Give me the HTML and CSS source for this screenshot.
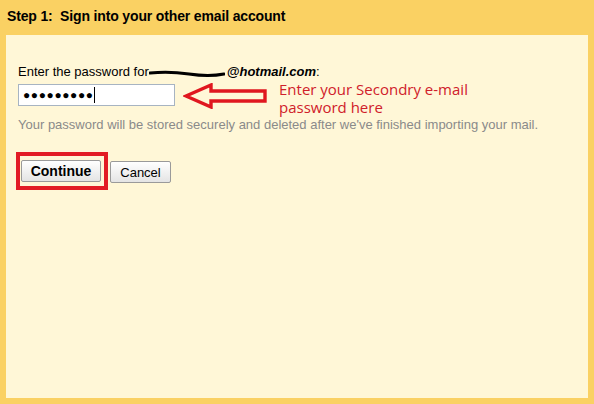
FILE: index.html
```html
<!DOCTYPE html>
<html>
<head>
<meta charset="utf-8">
<link rel="stylesheet" href="styles.css">
</head>
<body>
<div class="frame">
  <div class="title">Step 1:&nbsp; Sign into your other email account</div>
  <div class="panel">
    <div class="label">Enter the password for<svg class="redact" width="76" height="8" viewBox="0 0 76 8"><path d="M1 4 Q20 2 40 5 T75 5" stroke="#000" stroke-width="3" fill="none" stroke-linecap="round"/></svg><b><i>@hotmail.com</i></b>:</div>
    <div class="row">
      <div class="input"><span class="dots">●●●●●●●●●</span><span class="caret"></span></div>
      <svg class="arrow" width="86" height="26" viewBox="0 0 86 26"><path d="M3 13 L28 2 L28 8 L82 8 L82 18 L28 18 L28 24 Z" fill="#fff7d7" stroke="#e0171f" stroke-width="3.4" stroke-linejoin="miter"/></svg>
      <div class="note">Enter your Secondry e-mail<br>password here</div>
    </div>
    <div class="hint">Your password will be stored securely and deleted after we've finished importing your mail.</div>
    <div class="buttons">
      <div class="highlight"><button class="btn primary">Continue</button></div>
      <button class="btn">Cancel</button>
    </div>
  </div>
</div>
</body>
</html>
```
FILE: styles.css
```css
html, body { margin: 0; padding: 0; }
body { width: 594px; height: 404px; overflow: hidden; font-family: Arial, "Liberation Sans", sans-serif; }
.frame {
  background: #fad163;
  height: 404px;
  box-sizing: border-box;
  padding: 0 6px 6px 6px;
  display: flex;
  flex-direction: column;
}
.title {
  height: 35px;
  box-sizing: border-box;
  padding: 8px 0 0 1px;
  font-weight: bold;
  font-size: 14px;
  letter-spacing: -0.15px;
  color: #000;
}
.panel {
  flex: 1;
  background: #fff7d7;
  padding: 29px 0 0 12px;
}
.label { font-size: 13px; line-height: 15px; color: #000; height: 17px; display: flex; align-items: baseline; }
.redact { margin: 0 2px 0 0; position: relative; top: 1px; }
.row { display: flex; align-items: flex-start; margin-top: 3px; height: 24px; }
.input {
  height: 20px;
  border: 1px solid #a7b4c2;
  background: #fff;
  display: flex; align-items: center;
  padding-left: 4px;
  width: 151px;
}
.dots { font-size: 12px; letter-spacing: 0.6px; color: #000; }
.caret { width: 1px; height: 16px; background: #000; margin-left: 0; }
.arrow { margin: -1px 0 0 8px; }
.note {
  font-family: "Open Sans", sans-serif;
  font-size: 15px; line-height: 18px; color: #d0202a;
  margin: -4px 0 0 10px;
}
.hint { font-size: 13px; color: #8a8a8a; margin-top: 9px; }
.buttons { display: flex; align-items: flex-start; margin-top: 20px; margin-left: -2px; }
.highlight { border: 4px solid #e21c24; padding: 4px 3px 4px 1px; }
.btn {
  font-family: Arial, "Liberation Sans", sans-serif;
  font-size: 13px;
  height: 22px; padding: 0 8px;
  border: 1px solid #9a9a9a; border-radius: 2px;
  background: linear-gradient(#ffffff, #e4e4e4);
  color: #000;
}
.primary { font-weight: bold; font-size: 14px; width: 80px; }
.buttons > .btn { margin-left: 2px; margin-top: 9px; width: 61px; }
```
